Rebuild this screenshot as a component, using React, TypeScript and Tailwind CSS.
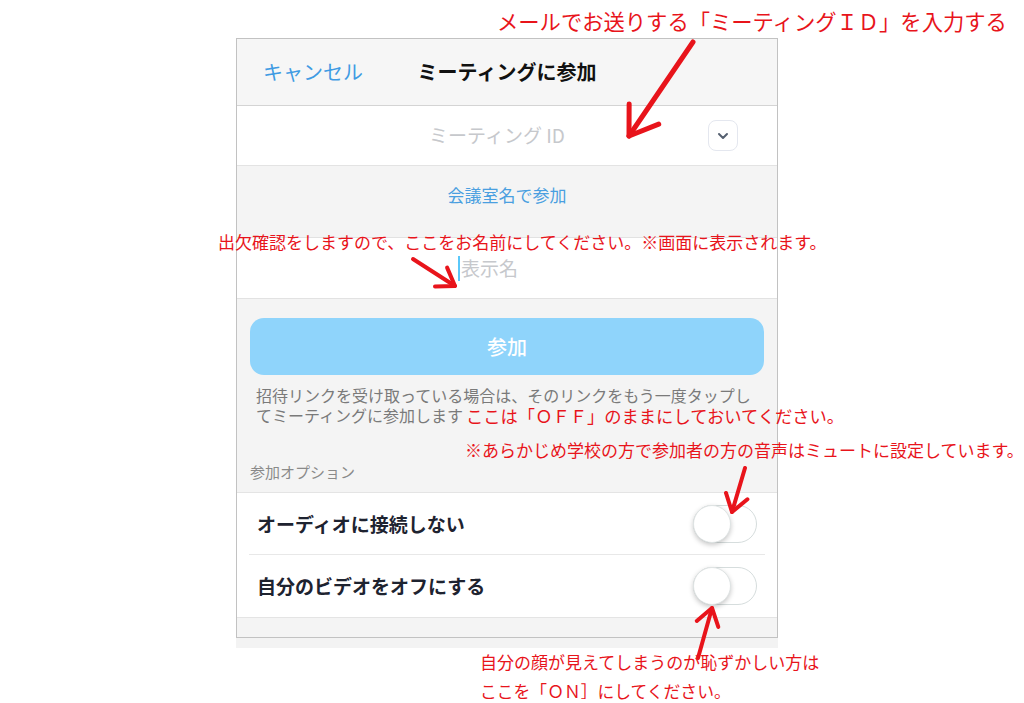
import type { ReactNode } from "react";

const RED = "#e8141b";

// Straight annotation arrow: shaft from tail to tip plus two wings at the tip.
function Arrow({
	tail,
	tip,
	head = 22,
	width = 4,
}: {
	tail: [number, number];
	tip: [number, number];
	head?: number;
	width?: number;
}) {
	const dx = tip[0] - tail[0];
	const dy = tip[1] - tail[1];
	const len = Math.hypot(dx, dy);
	const ux = dx / len;
	const uy = dy / len;
	const wing = (deg: number) => {
		const a = (deg * Math.PI) / 180;
		const rx = ux * Math.cos(a) - uy * Math.sin(a);
		const ry = ux * Math.sin(a) + uy * Math.cos(a);
		return `${tip[0] - rx * head},${tip[1] - ry * head}`;
	};
	return (
		<g stroke={RED} strokeWidth={width} strokeLinecap="round" strokeLinejoin="round" fill="none">
			<line x1={tail[0]} y1={tail[1]} x2={tip[0]} y2={tip[1]} />
			<polyline points={`${wing(34)} ${tip[0]},${tip[1]} ${wing(-34)}`} />
		</g>
	);
}

function Note({ className, children }: { className: string; children: ReactNode }) {
	return (
		<div className={`absolute whitespace-nowrap leading-none text-[#e8141b] ${className}`}>
			{children}
		</div>
	);
}

function Toggle() {
	return (
		<div className="flex h-[38px] w-[64px] items-center rounded-full border border-[#d6dddd] bg-white">
			<div className="-ml-px h-[38px] w-[38px] rounded-full border border-[#dfe4e4] bg-white shadow-[0_2px_5px_rgba(0,0,0,0.22)]" />
		</div>
	);
}

function OptionRow({ label, divider }: { label: string; divider?: boolean }) {
	return (
		<div className="relative flex h-[62px] items-center justify-between pl-[20px] pr-[20px]">
			<span className="text-[19px] font-bold text-[#1e2330]">{label}</span>
			<Toggle />
			{divider && <div className="absolute bottom-0 left-[12px] right-[12px] h-px bg-[#e8e8e8]" />}
		</div>
	);
}

export default function App() {
	return (
		<div className="relative h-[703px] w-[1024px] overflow-hidden bg-white font-['Noto_Sans_CJK_JP',sans-serif]">
			<div className="pl-[236px] pt-[38px]">
				<div className="w-[542px] border border-[#c2c2c2] bg-[#f4f4f4]">
					{/* header */}
					<div className="grid h-[67px] grid-cols-[1fr_auto_1fr] items-center border-b border-[#d4d4d4] bg-[#f6f6f6]">
						<span className="pl-[26px] text-[20px] text-[#3f9be3]">キャンセル</span>
						<span className="text-[20px] font-bold text-[#111]">ミーティングに参加</span>
						<span />
					</div>

					{/* meeting id */}
					<div className="flex h-[60px] items-center border-b border-[#e3e3e3] bg-white">
						<div className="w-[49px]" />
						<span className="flex-1 text-center text-[19px] text-[#c6c8cc]">ミーティング ID</span>
						<div className="mr-[39px] flex h-[31px] w-[30px] items-center justify-center rounded-[8px] border border-[#e4e7ef] bg-white">
							<svg width="12" height="8" viewBox="0 0 12 8">
								<path d="M2 2l4 4 4-4" stroke="#556070" strokeWidth="2" fill="none" strokeLinecap="round" strokeLinejoin="round" />
							</svg>
						</div>
					</div>

					<div className="flex h-[71px] justify-center pt-[18px]">
						<span className="text-[17px] leading-[22px] text-[#4a9fe0]">会議室名で参加</span>
					</div>

					{/* display name */}
					<div className="flex h-[62px] items-center justify-center border-y border-[#e2e2e2] bg-white pr-[38px]">
						<span className="mr-px h-[25px] w-[2px] bg-[#5ac8fa]" />
						<span className="text-[19px] text-[#c6c8cc]">表示名</span>
					</div>

					<div className="px-[13px] pt-[19px]">
						<div className="flex h-[57px] items-center justify-center rounded-[14px] bg-[#8fd4fb]">
							<span className="text-[20px] font-medium text-white">参加</span>
						</div>
						<div className="mt-[10px] flex flex-col items-start pl-[6px] text-[16px] leading-[20px] text-[#7a7a7a]">
							<span>招待リンクを受け取っている場合は、そのリンクをもう一度タップし</span>
							<span>てミーティングに参加します</span>
						</div>
						<div className="mt-[37px] pb-[10px] text-[15px] leading-[20px] text-[#8a8a8a]">参加オプション</div>
					</div>

					{/* options */}
					<div className="border-y border-[#e4e4e4] bg-white">
						<OptionRow label="オーディオに接続しない" divider />
						<OptionRow label="自分のビデオをオフにする" />
					</div>
					<div className="h-[19px]" />
				</div>
				<div className="h-[10px] w-[542px] bg-[#f3f3f3]" />
			</div>

			{/* red annotations */}
			<svg className="pointer-events-none absolute left-0 top-0" width="1024" height="703">
				<Arrow tail={[693, 42]} tip={[629, 136]} head={32} width={5} />
				<Arrow tail={[413, 259]} tip={[455, 286]} head={20} />
				<Arrow tail={[745, 468]} tip={[732, 512]} head={20} />
				<Arrow tail={[698, 658]} tip={[712, 608]} head={20} />
			</svg>
			<Note className="left-[497px] top-[10px] text-[21.3px]">メールでお送りする「ミーティングＩＤ」を入力する</Note>
			<Note className="left-[218px] top-[233px] text-[17px]">
				出欠確認をしますので、ここをお名前にしてください。※画面に表示されます。
			</Note>
			<Note className="left-[466px] top-[407px] text-[17.3px]">ここは「ＯＦＦ」のままにしておいてください。</Note>
			<Note className="left-[465px] top-[441px] text-[17px]">
				※あらかじめ学校の方で参加者の方の音声はミュートに設定しています。
			</Note>
			<Note className="left-[480px] top-[653px] text-[17px]">自分の顔が見えてしまうのが恥ずかしい方は</Note>
			<Note className="left-[480px] top-[683px] text-[16.8px]">ここを「ＯＮ］にしてください。</Note>
		</div>
	);
}
